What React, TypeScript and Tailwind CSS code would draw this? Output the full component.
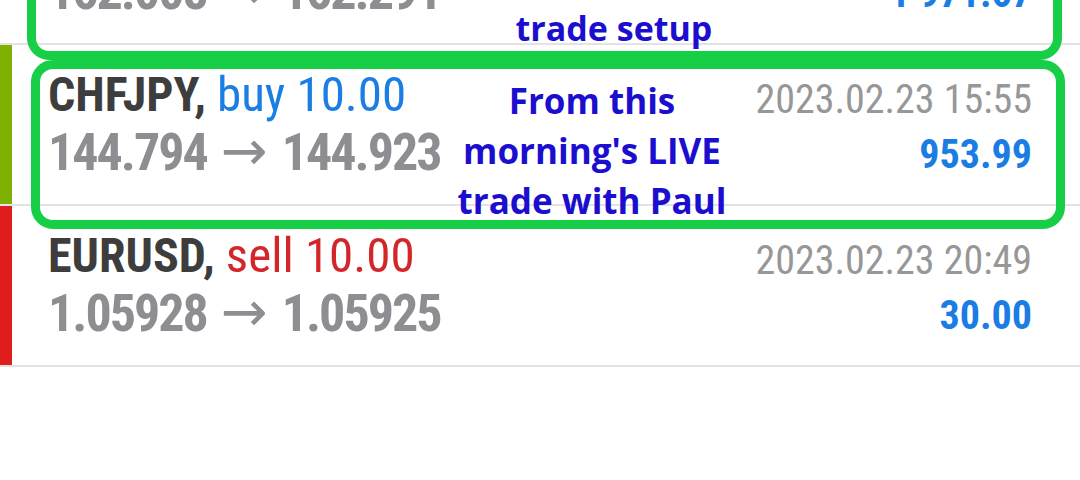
import React from "react";

type Row = {
  symbol: string;
  side: string;
  sideColor: string;
  from: string;
  to: string;
  date: string;
  profit: string;
  bar: string;
};

const rows: Row[] = [
  {
    symbol: "GBPJPY,",
    side: "buy 10.00",
    sideColor: "text-[#1b7ee2]",
    from: "162.008",
    to: "162.291",
    date: "2023.02.23 10:12",
    profit: "1 971.67",
    bar: "bg-transparent",
  },
  {
    symbol: "CHFJPY,",
    side: "buy 10.00",
    sideColor: "text-[#1b7ee2]",
    from: "144.794",
    to: "144.923",
    date: "2023.02.23 15:55",
    profit: "953.99",
    bar: "bg-[#7fb004]",
  },
  {
    symbol: "EURUSD,",
    side: "sell 10.00",
    sideColor: "text-[#d2262b]",
    from: "1.05928",
    to: "1.05925",
    date: "2023.02.23 20:49",
    profit: "30.00",
    bar: "bg-[#e01c1c]",
  },
];

function TradeRow({ r }: { r: Row }) {
  return (
    <div className="flex h-[161px] border-b-2 border-[#e3e3e3]">
      <div className={`w-[12px] shrink-0 ${r.bar}`} />
      <div className="flex flex-1 justify-between pl-[36px] pr-[48px]">
        <div className="flex flex-col pt-[22px]">
          <div className="text-[48px] leading-[56px] whitespace-nowrap">
            <span className="font-bold text-[#3d3d3d]">{r.symbol}</span>{" "}
            <span className={`text-[49px] ${r.sideColor}`}>{r.side}</span>
          </div>
          <div className="flex items-center text-[52px] leading-[60px] font-bold tracking-[-2px] text-[#8e8e92] whitespace-nowrap">
            <span>{r.from}</span>
            <span className="ml-[14px] mr-[14px] mb-[4px] font-['DejaVu_Sans',sans-serif] text-[56px] font-normal leading-[40px] tracking-normal">
              →
            </span>
            <span>{r.to}</span>
          </div>
        </div>
        <div className="flex flex-col items-end pt-[31px]">
          <div className="text-[40px] leading-[48px] text-[#979797] whitespace-nowrap">{r.date}</div>
          <div className="text-[40px] leading-[62px] font-bold text-[#1a7de3] whitespace-nowrap">{r.profit}</div>
        </div>
      </div>
    </div>
  );
}

export default function App() {
  return (
    <div className="relative h-[480px] w-[1080px] overflow-hidden bg-white font-['Roboto_Condensed',Roboto,sans-serif]">
      <div className="-mt-[116px]">
        {rows.map((r) => (
          <TradeRow key={r.date} r={r} />
        ))}
      </div>

      {/* annotation boxes */}
      <div className="absolute left-[27px] top-[-120px] h-[180px] w-[1035px] rounded-[22px] border-[9px] border-[#17cf47]" />
      <div className="absolute left-[31px] top-[60px] h-[169px] w-[1034px] rounded-[22px] border-[9px] border-[#17cf47]" />

      <div className="absolute left-[614px] top-[3px] -translate-x-1/2 whitespace-nowrap text-center font-['Open_Sans',sans-serif] text-[34px] font-bold leading-[50px] text-[#1b0ecf]">
        trade setup
      </div>
      <div className="absolute left-[592px] top-[76px] -translate-x-1/2 whitespace-nowrap text-center font-['Open_Sans',sans-serif] text-[35px] font-bold leading-[50px] text-[#1b0ecf]">
        From this
        <br />
        morning's LIVE
        <br />
        trade with Paul
      </div>
    </div>
  );
}
